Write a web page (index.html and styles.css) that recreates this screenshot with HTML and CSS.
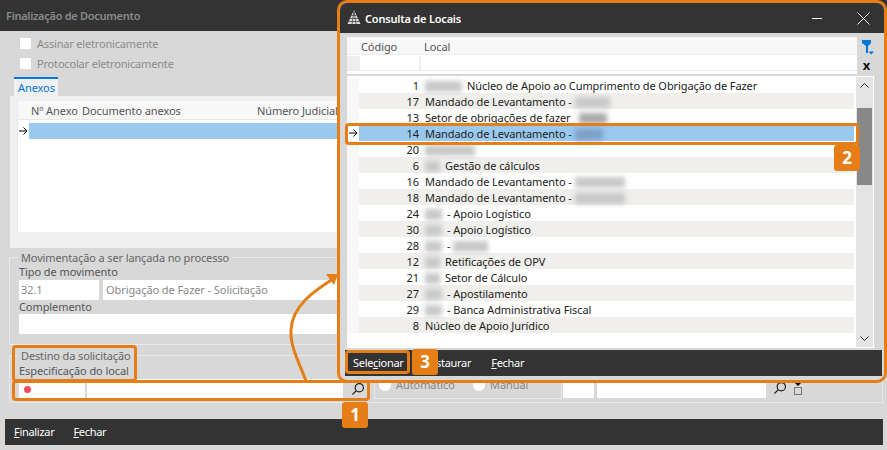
FILE: index.html
```html
<!DOCTYPE html>
<html lang="pt-BR">
<head>
    <meta charset="UTF-8">
    <title>Consulta de Locais</title>
    <link rel="stylesheet" href="styles.css">
</head>
<body>
    <!-- Janela de fundo -->
    <div class="window">
        <div class="title-bar">Finalização de Documento</div>
        <div class="options">
            <label class="check"><span class="check-box"></span>Assinar eletronicamente</label>
            <label class="check"><span class="check-box"></span>Protocolar eletronicamente</label>
        </div>
        <div class="tab">Anexos</div>
        <div class="tab-panel">
            <div class="attach-grid">
                <div class="attach-head">
                    <span class="col-num">Nº Anexo</span>
                    <span class="col-doc">Documento anexos</span>
                    <span>Número Judicial</span>
                </div>
                <div class="attach-row">
                    <span class="pointer"><svg class="arrow" viewBox="0 0 9 8"><path d="M0 4 H8 M4.5 0.5 L8 4 L4.5 7.5"/></svg></span>
                    <span class="attach-sel"></span>
                </div>
            </div>
        </div>

        <fieldset class="group group-mov">
            <legend>Movimentação a ser lançada no processo</legend>
            <div class="field-label">Tipo de movimento</div>
            <div class="field-row">
                <div class="input input-code">32.1</div>
                <div class="input input-grow">Obrigação de Fazer - Solicitação</div>
            </div>
            <div class="field-label label-comp">Complemento</div>
            <div class="input input-wide"></div>
        </fieldset>

        <fieldset class="group group-dest">
            <legend>Destino da solicitação</legend>
            <div class="dest-cols">
                <div class="dest-left">
                    <div class="field-label label-local">Especificação do local</div>
                    <div class="field-row">
                        <div class="input input-dot"><span class="dot"></span></div>
                        <div class="input input-local"></div>
                        <svg class="search" viewBox="0 0 16 16"><circle cx="9.5" cy="6.5" r="4.7"/><path d="M6 10 L1.5 14.5"/></svg>
                    </div>
                </div>
                <div class="dest-mode">
                    <span class="radio"></span><span class="mode-text">Automático</span>
                    <span class="radio"></span><span class="mode-text">Manual</span>
                </div>
                <div class="input input-small"></div>
                <div class="input input-right"></div>
                <svg class="search" viewBox="0 0 16 16"><circle cx="9.5" cy="6.5" r="4.7"/><path d="M6 10 L1.5 14.5"/></svg>
                <div class="stack-icon"><span class="stack-arrow"></span><span class="stack-box"></span></div>
            </div>
        </fieldset>

        <div class="action-bar">
            <span class="action"><u>F</u>inalizar</span>
            <span class="action"><u>F</u>echar</span>
        </div>
    </div>

    <!-- Consulta de Locais -->
    <div class="modal">
        <div class="modal-title">
            <svg class="logo" viewBox="0 0 14 14"><path d="M7 0 L13.5 14 H0.5 Z"/><path class="logo-lines" d="M1.5 11.5 H12.5 M3 8.5 H11 M4.5 5.5 H9.5 M5 14 L7 1 L9 14"/></svg>
            <span>Consulta de Locais</span>
            <span class="win-min"></span>
            <svg class="win-close" viewBox="0 0 13 13"><path d="M0.5 0.5 L12.5 12.5 M12.5 0.5 L0.5 12.5"/></svg>
        </div>
        <div class="modal-body">
            <div class="search-head">
                <div class="search-panel">
                    <div class="head-row"><span class="head-code">Código</span><span>Local</span></div>
                    <div class="filter-row">
                        <span class="filter-ind"></span>
                        <span class="filter-code"></span>
                        <span class="filter-local"></span>
                    </div>
                </div>
                <div class="filter-tools">
                    <svg class="funnel" viewBox="0 0 12 15"><path d="M0 0 H9 V3 L6 6 V13 H4 V6 L0 3 Z"/><path d="M6.5 11.5 H12 L9.2 14.5 Z"/></svg>
                    <span class="clear">x</span>
                </div>
            </div>
            <div class="list">
                <div class="rows">
                    <div class="row"><span class="ind"></span><span class="code">1</span><span class="name"><i class="blur w37"></i>Núcleo de Apoio ao Cumprimento de Obrigação de Fazer</span></div>
                    <div class="row alt"><span class="ind"></span><span class="code">17</span><span class="name">Mandado de Levantamento - <i class="blur w35"></i></span></div>
                    <div class="row"><span class="ind"></span><span class="code">13</span><span class="name">Setor de obrigações de fazer <i class="blur w28 gap-left"></i></span></div>
                    <div class="row selected"><span class="ind"><svg class="arrow" viewBox="0 0 9 8"><path d="M0 4 H8 M4.5 0.5 L8 4 L4.5 7.5"/></svg></span><span class="code">14</span><span class="name">Mandado de Levantamento - <i class="blur w28 blue"></i></span></div>
                    <div class="row"><span class="ind"></span><span class="code">20</span><span class="name"><i class="blur w50"></i></span></div>
                    <div class="row alt"><span class="ind"></span><span class="code">6</span><span class="name"><i class="blur w15"></i>Gestão de cálculos</span></div>
                    <div class="row"><span class="ind"></span><span class="code">16</span><span class="name">Mandado de Levantamento - <i class="blur w50"></i></span></div>
                    <div class="row alt"><span class="ind"></span><span class="code">18</span><span class="name">Mandado de Levantamento - <i class="blur w50"></i></span></div>
                    <div class="row"><span class="ind"></span><span class="code">24</span><span class="name"><i class="blur w17"></i>- Apoio Logístico</span></div>
                    <div class="row alt"><span class="ind"></span><span class="code">30</span><span class="name"><i class="blur w17"></i>- Apoio Logístico</span></div>
                    <div class="row"><span class="ind"></span><span class="code">28</span><span class="name"><i class="blur w17"></i>- <i class="blur w35"></i></span></div>
                    <div class="row alt"><span class="ind"></span><span class="code">12</span><span class="name"><i class="blur w15"></i>Retificações de OPV</span></div>
                    <div class="row"><span class="ind"></span><span class="code">21</span><span class="name"><i class="blur w15"></i>Setor de Cálculo</span></div>
                    <div class="row alt"><span class="ind"></span><span class="code">27</span><span class="name"><i class="blur w17"></i>- Apostilamento</span></div>
                    <div class="row"><span class="ind"></span><span class="code">29</span><span class="name"><i class="blur w17"></i>- Banca Administrativa Fiscal</span></div>
                    <div class="row alt"><span class="ind"></span><span class="code">8</span><span class="name">Núcleo de Apoio Jurídico</span></div>
                </div>
                <div class="scrollbar">
                    <svg class="chev" viewBox="0 0 9 5"><path d="M0.5 4.5 L4.5 0.5 L8.5 4.5"/></svg>
                    <div class="thumb"></div>
                    <svg class="chev chev-down" viewBox="0 0 9 5"><path d="M0.5 0.5 L4.5 4.5 L8.5 0.5"/></svg>
                </div>
            </div>
            <div class="modal-actions">
                <span class="action">Sele<u>c</u>ionar</span>
                <span class="action"><u>R</u>estaurar</span>
                <span class="action"><u>F</u>echar</span>
            </div>
        </div>
    </div>

    <!-- Anotações do tutorial -->
    <div class="mark mark-row"></div>
    <div class="mark mark-select"></div>
    <div class="mark mark-dest"></div>
    <div class="mark mark-local"></div>
    <div class="badge badge-1">1</div>
    <div class="badge badge-2">2</div>
    <div class="badge badge-3">3</div>
    <svg class="curve" viewBox="0 0 887 450">
        <path class="curve-line" d="M306 381 C298 360 290 346 291 330 C292 306 314 291 333 279"/>
        <path class="curve-head" d="M338 274 L334 285 L326 274 Z"/>
    </svg>
</body>
</html>
```

FILE: styles.css
```css
* {
    box-sizing: border-box;
}
html, body {
    margin: 0;
    padding: 0;
}
body {
    width: 887px;
    height: 450px;
    overflow: hidden;
    position: relative;
    background-color: #d8d8d8;
    font-family: "Noto Sans", "Open Sans", sans-serif;
    font-size: 11px;
    letter-spacing: -0.08px;
    color: #555;
}

/* janela de fundo */
.title-bar {
    height: 31px;
    line-height: 31px;
    padding-left: 6px;
    background-color: #333;
    color: #8a8a8a;
    font-weight: 600;
    letter-spacing: -0.28px;
}
.options {
    padding: 2px 0 0 20px;
    height: 46px;
}
.check {
    display: flex;
    align-items: center;
    height: 20px;
    color: #8c8c8c;
    letter-spacing: -0.18px;
}
.check-box {
    width: 11px;
    height: 11px;
    margin-right: 6px;
    background-color: #fff;
}
.tab {
    width: 44px;
    height: 19px;
    margin-left: 14px;
    padding-left: 4px;
    line-height: 18px;
    border-top: 2px solid #0078d7;
    background-color: #f0f0f0;
    color: #0078d7;
}
.tab-panel {
    height: 152px;
    margin: 0 4px 0 10px;
    padding: 5px 0 16px 7px;
    background-color: #f0f0f0;
}
.attach-grid {
    height: 131px;
    background-color: #fff;
    border-left: 1px solid #e8e8e8;
}
.attach-head {
    display: flex;
    height: 19px;
    line-height: 19px;
    padding-left: 13px;
    background-color: #f8f8f8;
    border-bottom: 1px solid #e8e8e8;
    color: #555;
}
.col-num {
    width: 51px;
}
.col-doc {
    width: 175px;
}
.attach-row {
    display: flex;
    height: 16px;
    margin-top: 3px;
}
.pointer {
    display: flex;
    align-items: center;
    justify-content: center;
    width: 11px;
}
.arrow {
    width: 9px;
    height: 8px;
    fill: none;
    stroke: #000;
    stroke-width: 1;
}
.attach-sel {
    flex: 1;
    background-color: #99c9ef;
}
.group {
    min-width: 0;
    margin: 0 4px 0 9px;
    padding: 0 9px;
    border: 1px solid #e9e9e9;
}
.group legend {
    margin-left: -1px;
    padding: 0 3px;
    line-height: 15px;
    color: #666;
    letter-spacing: -0.13px;
}
.group-mov {
    height: 95px;
    margin-top: 2px;
}
.group-dest {
    height: 55px;
    margin-top: 3px;
}
.field-label {
    height: 15px;
    line-height: 13px;
    color: #555;
}
.label-comp {
    height: 14px;
    line-height: 14px;
}
.label-local {
    height: 16px;
    line-height: 16px;
}
.field-row {
    display: flex;
    align-items: center;
    gap: 4px;
}
.input {
    height: 20px;
    line-height: 20px;
    padding-left: 3px;
    background-color: #fff;
    color: #888;
}
.input-code {
    width: 80px;
    padding-left: 2px;
}
.input-grow {
    flex: 1;
}
.input-dot {
    width: 66px;
    padding-left: 5px;
}
.group-dest .input {
    height: 19px;
    line-height: 19px;
}
.input-local {
    width: 258px;
    margin-left: -2px;
    margin-right: 4px;
}
.dot {
    display: inline-block;
    width: 7px;
    height: 7px;
    border-radius: 50%;
    background-color: #f34a5a;
}
.search {
    width: 14px;
    height: 14px;
    flex: none;
    fill: none;
    stroke: #222;
    stroke-width: 1.4;
}
.dest-cols {
    display: flex;
    align-items: flex-end;
}
.dest-cols > .search {
    margin-bottom: 3px;
}
.dest-left {
    width: 346px;
}
.dest-mode {
    display: flex;
    align-items: center;
    width: 188px;
    height: 30px;
    margin: 0 1px -1px 9px;
    padding: 1px 0 0 4px;
    border: 1px solid #e9e9e9;
    color: #888;
}
.radio {
    width: 12px;
    height: 12px;
    margin-right: 5px;
    border-radius: 50%;
    background-color: #fff;
}
.mode-text {
    width: 77px;
}
.mode-text:last-child {
    width: auto;
}
.input-small {
    width: 31px;
    margin-right: 3px;
}
.input-right {
    width: 169px;
    margin-right: 7px;
}
.stack-icon {
    display: flex;
    flex-direction: column;
    align-items: center;
    margin: 0 0 3px 7px;
}
.stack-arrow {
    width: 0;
    height: 0;
    border-left: 4px solid transparent;
    border-right: 4px solid transparent;
    border-top: 4px solid #000;
}
.stack-box {
    width: 8px;
    height: 8px;
    margin-top: 1px;
    border: 1px solid #777;
}
.action-bar {
    display: flex;
    gap: 19px;
    height: 26px;
    margin: 16px 4px 0 5px;
    padding-left: 9px;
    line-height: 26px;
    background-color: #333;
}
.action {
    color: #fff;
    letter-spacing: -0.3px;
}

/* consulta de locais */
.modal {
    position: absolute;
    left: 337px;
    top: 0;
    width: 550px;
    height: 383px;
    border: 3px solid #e67e17;
    border-radius: 10px;
    overflow: hidden;
    background-color: #d8d8d8;
}
.modal-title {
    display: flex;
    align-items: center;
    height: 30px;
    padding-left: 7px;
    background-color: #333;
    color: #fff;
    font-weight: 600;
    letter-spacing: -0.2px;
}
.logo {
    width: 14px;
    height: 14px;
    margin: 0 4px 2px 0;
    fill: #ddd;
}
.logo-lines {
    fill: none;
    stroke: #333;
    stroke-width: 0.7;
}
.win-min {
    width: 10px;
    height: 1px;
    margin-left: auto;
    background-color: #fff;
}
.win-close {
    width: 13px;
    height: 13px;
    margin: 0 14px 0 35px;
    fill: none;
    stroke: #fff;
    stroke-width: 1;
}
.modal-body {
    padding: 4px 2px 0 5px;
}
.search-head {
    display: flex;
    padding-left: 2px;
    height: 37px;
}
.search-panel {
    width: 510px;
    background-color: #fff;
}
.head-row {
    display: flex;
    height: 18px;
    line-height: 20px;
    padding-left: 14px;
    background-color: #f8f8f8;
    border-bottom: 1px solid #ececec;
    color: #555;
}
.head-code {
    width: 63px;
}
.filter-row {
    display: flex;
    height: 15px;
    margin-top: 1px;
    border-bottom: 1px solid #ececec;
}
.filter-ind {
    width: 13px;
    background-color: #eee;
}
.filter-code {
    width: 61px;
    border-right: 2px solid #f0f0f0;
}
.filter-local {
    flex: 1;
}
.filter-tools {
    display: flex;
    flex-direction: column;
    align-items: center;
    width: 17px;
    margin-left: 2px;
    padding-top: 3px;
}
.funnel {
    width: 12px;
    height: 15px;
    fill: #0078d7;
}
.clear {
    margin: 3px 2px 0 0;
    line-height: 14px;
    font-size: 13px;
    font-weight: 700;
    color: #111;
}
.list {
    display: flex;
    height: 272px;
    margin: 2px 8px 0 2px;
    padding: 1px 1px 1px 0;
    background-color: #fff;
}
.rows {
    width: 508px;
}
.row {
    display: flex;
    height: 16px;
    line-height: 18px;
    color: #222;
    white-space: nowrap;
}
.ind {
    display: flex;
    align-items: center;
    justify-content: center;
    width: 12px;
    flex: none;
    height: 16px;
    background-color: #f8f8f8;
}
.code {
    width: 61px;
    flex: none;
    height: 16px;
    padding-right: 1px;
    text-align: right;
}
.name {
    flex: 1;
    height: 16px;
    padding-left: 5px;
}
.alt .code, .alt .name {
    background-color: #f0efeb;
}
.selected .code, .selected .name {
    background-color: #99c9ef;
}
.selected .ind {
    background-color: #fff;
}
.blur {
    display: inline-block;
    height: 11px;
    margin-right: 5px;
    vertical-align: -2px;
    background-color: #c8c8c8;
    filter: blur(2.5px);
}
.blue {
    background-color: #7f9fc4;
}
.gap-left {
    margin-left: 6px;
    background-color: #aaa;
}
.w15 { width: 15px; }
.w17 { width: 17px; }
.w28 { width: 28px; }
.w35 { width: 35px; }
.w37 { width: 37px; }
.w50 { width: 50px; }
.scrollbar {
    display: flex;
    flex-direction: column;
    align-items: center;
    width: 17px;
    margin-left: 2px;
    padding: 6px 1px;
    background-color: #e4e4e4;
}
.chev {
    width: 9px;
    height: 5px;
    fill: none;
    stroke: #222;
}
.chev-down {
    margin-top: auto;
}
.thumb {
    width: 15px;
    height: 77px;
    margin-top: 20px;
    background-color: #888;
}
.modal-actions {
    display: flex;
    height: 26px;
    margin-top: 2px;
    padding-left: 8px;
    line-height: 26px;
    background-color: #333;
}
.modal-actions .action {
    margin-right: 20px;
}

/* anotações */
.mark {
    position: absolute;
    border: 3px solid #e67e17;
    border-radius: 4px;
}
.mark-row {
    left: 345px;
    top: 123px;
    width: 514px;
    height: 22px;
}
.mark-select {
    left: 345px;
    top: 350px;
    width: 65px;
    height: 24px;
}
.mark-dest {
    left: 12px;
    top: 345px;
    width: 125px;
    height: 37px;
}
.mark-local {
    left: 12px;
    top: 380px;
    width: 358px;
    height: 21px;
}
.badge {
    position: absolute;
    width: 26px;
    height: 26px;
    border-radius: 3px;
    background-color: #e67e17;
    color: #fff;
    font-size: 17px;
    font-weight: 700;
    line-height: 26px;
    text-align: center;
}
.badge-1 {
    left: 342px;
    top: 402px;
}
.badge-2 {
    left: 834px;
    top: 145px;
}
.badge-3 {
    left: 412px;
    top: 349px;
}
.curve {
    position: absolute;
    left: 0;
    top: 0;
    width: 887px;
    height: 450px;
    pointer-events: none;
}
.curve-line {
    fill: none;
    stroke: #e67e17;
    stroke-width: 3;
}
.curve-head {
    fill: #e67e17;
}
```
